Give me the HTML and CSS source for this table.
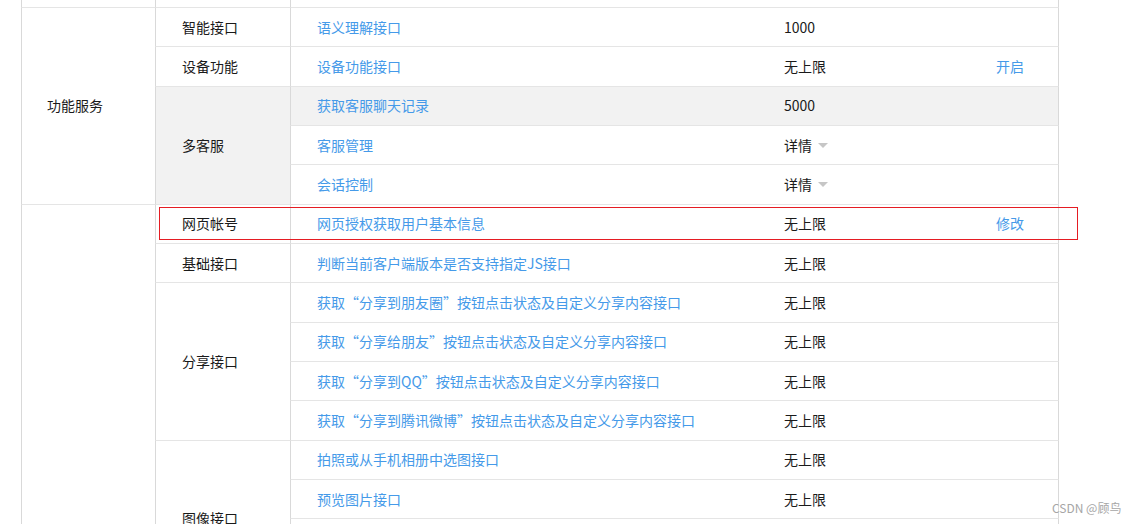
FILE: index.html
```html
<!DOCTYPE html>
<html lang="zh">
<head>
<meta charset="utf-8">
<title>接口权限</title>
<link rel="stylesheet" href="styles.css">
</head>
<body>
<div class="page">
<table class="perm">
  <tbody>
    <tr class="stub">
      <td class="c1"></td><td class="c2"></td><td class="c3"></td><td class="c4"></td><td class="c5"></td>
    </tr>
    <tr>
      <td class="c1" rowspan="5">功能服务</td>
      <td class="c2">智能接口</td>
      <td class="c3"><a class="link">语义理解接口</a></td>
      <td class="c4">1000</td>
      <td class="c5"></td>
    </tr>
    <tr>
      <td class="c2">设备功能</td>
      <td class="c3"><a class="link">设备功能接口</a></td>
      <td class="c4">无上限</td>
      <td class="c5"><a class="link">开启</a></td>
    </tr>
    <tr class="hover">
      <td class="c2" rowspan="3">多客服</td>
      <td class="c3"><a class="link">获取客服聊天记录</a></td>
      <td class="c4">5000</td>
      <td class="c5"></td>
    </tr>
    <tr>
      <td class="c3"><a class="link">客服管理</a></td>
      <td class="c4">详情<span class="caret"></span></td>
      <td class="c5"></td>
    </tr>
    <tr>
      <td class="c3"><a class="link">会话控制</a></td>
      <td class="c4">详情<span class="caret"></span></td>
      <td class="c5"></td>
    </tr>
    <tr>
      <td class="c1" rowspan="10"></td>
      <td class="c2">网页帐号</td>
      <td class="c3"><a class="link">网页授权获取用户基本信息</a></td>
      <td class="c4">无上限</td>
      <td class="c5"><a class="link">修改</a></td>
    </tr>
    <tr>
      <td class="c2">基础接口</td>
      <td class="c3"><a class="link">判断当前客户端版本是否支持指定JS接口</a></td>
      <td class="c4">无上限</td>
      <td class="c5"></td>
    </tr>
    <tr>
      <td class="c2" rowspan="4">分享接口</td>
      <td class="c3"><a class="link">获取“分享到朋友圈”按钮点击状态及自定义分享内容接口</a></td>
      <td class="c4">无上限</td>
      <td class="c5"></td>
    </tr>
    <tr>
      <td class="c3"><a class="link">获取“分享给朋友”按钮点击状态及自定义分享内容接口</a></td>
      <td class="c4">无上限</td>
      <td class="c5"></td>
    </tr>
    <tr>
      <td class="c3"><a class="link">获取“分享到QQ”按钮点击状态及自定义分享内容接口</a></td>
      <td class="c4">无上限</td>
      <td class="c5"></td>
    </tr>
    <tr>
      <td class="c3"><a class="link">获取“分享到腾讯微博”按钮点击状态及自定义分享内容接口</a></td>
      <td class="c4">无上限</td>
      <td class="c5"></td>
    </tr>
    <tr>
      <td class="c2" rowspan="4">图像接口</td>
      <td class="c3"><a class="link">拍照或从手机相册中选图接口</a></td>
      <td class="c4">无上限</td>
      <td class="c5"></td>
    </tr>
    <tr>
      <td class="c3"><a class="link">预览图片接口</a></td>
      <td class="c4">无上限</td>
      <td class="c5"></td>
    </tr>
    <tr>
      <td class="c3"><a class="link">上传图片接口</a></td>
      <td class="c4">无上限</td>
      <td class="c5"></td>
    </tr>
    <tr>
      <td class="c3"><a class="link">下载图片接口</a></td>
      <td class="c4">无上限</td>
      <td class="c5"></td>
    </tr>
  </tbody>
</table>
<div class="highlight"></div>
<div class="watermark">CSDN @顾鸟</div>
</div>
</body>
</html>
```

FILE: styles.css
```css
html, body {
  margin: 0;
  padding: 0;
  overflow: hidden;
  background: #ffffff;
}

.page {
  position: relative;
  width: 1135px;
  height: 524px;
  overflow: hidden;
  font-family: "Microsoft YaHei", "Noto Sans CJK SC", "Noto Sans", sans-serif;
  font-size: 14px;
  color: #1a1a1a;
}

.perm {
  margin-left: 21px;
  width: 1038px;
  table-layout: fixed;
  border-collapse: separate;
  border-spacing: 0;
}

.perm td {
  box-sizing: border-box;
  height: 39.35px;
  padding: 0 0 1px 26px;
  border-bottom: 1px solid #e5e5e5;
  vertical-align: middle;
  white-space: nowrap;
  line-height: 20px;
}

.perm .stub td {
  height: 8px;
  padding: 0;
}

.perm .c1 { width: 134px; border-left: 1px solid #d9d9d9; }
.perm .c2 { width: 135px; border-left: 1px solid #d9d9d9; }
.perm .c3 { width: 467px; border-left: 1px solid #d9d9d9; }
.perm .c4 { width: 212px; }
.perm .c5 { width: 90px; border-right: 1px solid #d9d9d9; }

.perm td.c1 { padding-left: 25px; }
.perm td.c4,
.perm td.c5 { padding-left: 27px; }

.perm .hover td {
  background: #f2f2f2;
}

.link {
  color: #459ae9;
  text-decoration: none;
  cursor: pointer;
}

.caret {
  display: inline-block;
  width: 0;
  height: 0;
  margin-left: 6px;
  vertical-align: 3px;
  border-left: 5px solid transparent;
  border-right: 5px solid transparent;
  border-top: 5px solid #c6c6c6;
}

.highlight {
  position: absolute;
  left: 159px;
  top: 207px;
  width: 917px;
  height: 31px;
  border: 1px solid #e51c23;
  pointer-events: none;
}

.watermark {
  position: absolute;
  left: 1052px;
  top: 500px;
  font-size: 12px;
  line-height: 16px;
  color: #a6a6a6;
  text-shadow: 0 0 1px #ffffff;
  white-space: nowrap;
}
```
